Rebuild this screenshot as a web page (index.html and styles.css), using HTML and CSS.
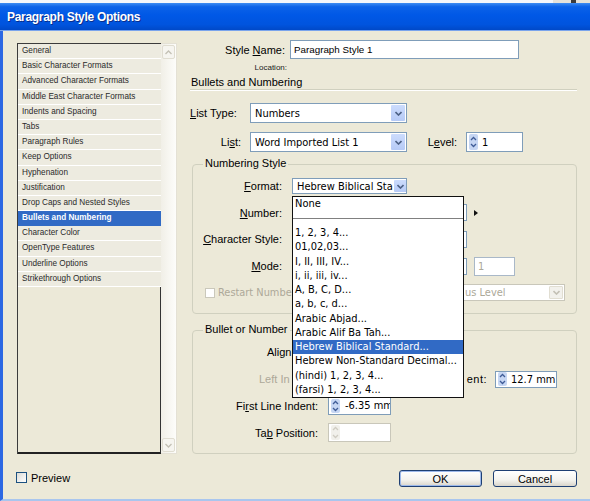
FILE: index.html
```html
<!DOCTYPE html>
<html lang="en">
<head>
    <meta charset="UTF-8">
    <title>Paragraph Style Options</title>
    <link rel="stylesheet" href="styles.css">
</head>
<body>
    <div class="window">
        <div class="frame-top"><span class="behind"></span></div>
        <div class="titlebar">Paragraph Style Options</div>

        <div class="dialog">
            <div class="sidebar">
                <div class="category-list">
                    <div class="items">
                        <div class="item">General</div>
                        <div class="item">Basic Character Formats</div>
                        <div class="item">Advanced Character Formats</div>
                        <div class="item">Middle East Character Formats</div>
                        <div class="item">Indents and Spacing</div>
                        <div class="item">Tabs</div>
                        <div class="item">Paragraph Rules</div>
                        <div class="item">Keep Options</div>
                        <div class="item">Hyphenation</div>
                        <div class="item">Justification</div>
                        <div class="item">Drop Caps and Nested Styles</div>
                        <div class="item selected">Bullets and Numbering</div>
                        <div class="item">Character Color</div>
                        <div class="item">OpenType Features</div>
                        <div class="item">Underline Options</div>
                        <div class="item">Strikethrough Options</div>
                        <div class="empty"></div>
                    </div>
                    <div class="scrollbar">
                        <div class="sb-btn">
                            <svg width="7" height="5" viewBox="0 0 7 5"><path d="M0.5 4 3.5 1 6.5 4"/></svg>
                        </div>
                        <div class="sb-btn">
                            <svg width="7" height="5" viewBox="0 0 7 5"><path d="M0.5 1 3.5 4 6.5 1"/></svg>
                        </div>
                    </div>
                </div>
                <div class="preview">
                    <span class="checkbox"></span>
                    <span>Preview</span>
                </div>
            </div>

            <div class="main">
                <div class="row style-name">
                    <span class="lbl lbl-name">Style <u>N</u>ame:</span>
                    <div class="textbox">Paragraph Style 1</div>
                </div>
                <div class="location">Location:</div>
                <div class="section-title">Bullets and Numbering</div>

                <div class="row list-type">
                    <span class="lbl lbl-type"><u>L</u>ist Type:</span>
                    <div class="select wide">
                        <span class="value">Numbers</span>
                        <span class="drop-btn"><svg width="7" height="5" viewBox="0 0 7 5"><path d="M0.5 1 3.5 4 6.5 1"/></svg></span>
                    </div>
                </div>

                <div class="row list-row">
                    <span class="lbl lbl-list">Li<u>s</u>t:</span>
                    <div class="select wide">
                        <span class="value">Word Imported List 1</span>
                        <span class="drop-btn"><svg width="7" height="5" viewBox="0 0 7 5"><path d="M0.5 1 3.5 4 6.5 1"/></svg></span>
                    </div>
                    <span class="lbl lbl-level">L<u>e</u>vel:</span>
                    <div class="spin level">
                        <svg class="spin-arrows" width="9" height="16" viewBox="0 0 9 16"><rect x="0" y="0" width="9" height="16" rx="2"/><path d="M2 6 4.5 3.5 7 6"/><path d="M2 10 4.5 12.5 7 10"/></svg>
                        <span>1</span>
                    </div>
                </div>

                <div class="group numbering">
                    <span class="legend">Numbering Style</span>
                    <div class="grow">
                        <span class="lbl lbl-g1"><u>F</u>ormat:</span>
                        <div class="select format">
                            <span class="value">Hebrew Biblical Sta</span>
                            <span class="drop-btn"><svg width="7" height="5" viewBox="0 0 7 5"><path d="M0.5 1 3.5 4 6.5 1"/></svg></span>
                        </div>
                    </div>
                    <div class="grow">
                        <span class="lbl lbl-g1"><u>N</u>umber:</span>
                        <div class="textbox field"></div>
                        <span class="arrow-right"></span>
                    </div>
                    <div class="grow">
                        <span class="lbl lbl-g1"><u>C</u>haracter Style:</span>
                        <div class="textbox field"></div>
                    </div>
                    <div class="grow">
                        <span class="lbl lbl-g1"><u>M</u>ode:</span>
                        <div class="textbox field"></div>
                        <div class="textbox mini disabled">1</div>
                    </div>
                    <div class="grow">
                        <span class="checkbox small disabled"></span>
                        <span class="restart-label">Restart Numbe</span>
                        <div class="select restart disabled">
                            <span class="value">us Level</span>
                            <span class="drop-btn"><svg width="7" height="5" viewBox="0 0 7 5"><path d="M0.5 1 3.5 4 6.5 1"/></svg></span>
                        </div>
                    </div>
                </div>

                <div class="group position">
                    <span class="legend">Bullet or Number</span>
                    <div class="grow tall">
                        <span class="lbl-cut align-cut">Align</span>
                        <div class="select align">
                            <span class="value"></span>
                            <span class="drop-btn"><svg width="7" height="5" viewBox="0 0 7 5"><path d="M0.5 1 3.5 4 6.5 1"/></svg></span>
                        </div>
                    </div>
                    <div class="grow tall">
                        <span class="lbl-cut indent-cut muted">Left In</span>
                        <div class="spin indent disabled hidden-part"></div>
                        <span class="lbl lbl-right">ent:</span>
                        <div class="spin indent right">
                            <svg class="spin-arrows" width="9" height="14" viewBox="0 0 9 14"><rect x="0" y="0" width="9" height="14" rx="2"/><path d="M2 5 4.5 2.5 7 5"/><path d="M2 9 4.5 11.5 7 9"/></svg>
                            <span>12.7 mm</span>
                        </div>
                    </div>
                    <div class="grow tall">
                        <span class="lbl lbl-g2">Fi<u>r</u>st Line Indent:</span>
                        <div class="spin indent first">
                            <svg class="spin-arrows" width="9" height="14" viewBox="0 0 9 14"><rect x="0" y="0" width="9" height="14" rx="2"/><path d="M2 5 4.5 2.5 7 5"/><path d="M2 9 4.5 11.5 7 9"/></svg>
                            <span>-6.35 mm</span>
                        </div>
                    </div>
                    <div class="grow tall">
                        <span class="lbl lbl-g2">Ta<u>b</u> Position:</span>
                        <div class="spin indent disabled tab">
                            <svg class="spin-arrows" width="9" height="15" viewBox="0 0 9 15"><rect x="0" y="0" width="9" height="15" rx="2"/><path d="M2 5 4.5 2.5 7 5"/><path d="M2 10 4.5 12.5 7 10"/></svg>
                        </div>
                    </div>
                </div>

                <div class="buttons">
                    <button class="btn default">OK</button>
                    <button class="btn">Cancel</button>
                </div>

                <!-- open Format menu -->
                <div class="dropdown">
                    <div class="dd-head">None</div>
                    <div class="dd-items">
                        <div class="dd-item">1, 2, 3, 4...</div>
                        <div class="dd-item">01,02,03...</div>
                        <div class="dd-item">I, II, III, IV...</div>
                        <div class="dd-item">i, ii, iii, iv...</div>
                        <div class="dd-item">A, B, C, D...</div>
                        <div class="dd-item">a, b, c, d...</div>
                        <div class="dd-item">Arabic Abjad...</div>
                        <div class="dd-item">Arabic Alif Ba Tah...</div>
                        <div class="dd-item active">Hebrew Biblical Standard...</div>
                        <div class="dd-item">Hebrew Non-Standard Decimal...</div>
                        <div class="dd-item">(hindi) 1, 2, 3, 4...</div>
                        <div class="dd-item">(farsi) 1, 2, 3, 4...</div>
                    </div>
                </div>
            </div>
        </div>
    </div>
</body>
</html>
```

FILE: styles.css
```css
:root {
    --face: #ECE9D8;
    --field-border: #7F9DB9;
    --group-border: #D0D0BF;
    --disabled: #ACA899;
    --highlight: #316AC5;
}

* {
    box-sizing: border-box;
}

html, body {
    margin: 0;
}

body {
    width: 590px;
    height: 501px;
    overflow: hidden;
    background-color: var(--face);
    font-family: "Liberation Sans", Arial, sans-serif;
    font-size: 11px;
    color: #000;
}

u {
    text-decoration-thickness: 1px;
    text-underline-offset: 1px;
}

.window {
    width: 590px;
    height: 501px;
    display: flex;
    flex-direction: column;
}

.frame-top {
    height: 3px;
    background-color: #F3F6FB;
    position: relative;
}

.frame-top .behind {
    position: absolute;
    right: 0;
    top: 0;
    width: 37px;
    height: 3px;
    background: linear-gradient(to right, #E4E2DA 0, #E4E2DA 18px, #3B3B3B 18px, #3B3B3B 23px, #E4E2DA 23px);
}

.titlebar {
    height: 28px;
    display: flex;
    align-items: center;
    padding-left: 7px;
    padding-top: 1px;
    background: linear-gradient(#3C8CF3 0%, #0B62E8 14%, #0058E6 45%, #0054DE 80%, #0049C8 100%);
    border-bottom: 1px solid #7AA4EC;
    color: #fff;
    font-weight: bold;
    font-size: 12px;
    letter-spacing: -0.3px;
    text-shadow: 1px 1px 0 #0A2E8C;
}

.dialog {
    flex: 1;
    display: flex;
    border-left: 3px solid #2D68E3;
    border-bottom: 2px solid #A9C6EE;
}

/* left column */

.sidebar {
    width: 160px;
    margin-left: 14px;
    padding-top: 12px;
}

.category-list {
    display: flex;
    height: 411px;
}

.items {
    width: 144px;
    display: flex;
    flex-direction: column;
    border-left: 1px solid #3C3C3C;
    border-top: 1px solid #3C3C3C;
}

.item {
    height: 15.2px;
    line-height: 14px;
    padding-left: 4px;
    font-size: 8.2px;
    color: #2A2A2A;
    white-space: nowrap;
    border-bottom: 1px solid #fff;
    background-color: #EDEBE0;
}

.item.selected {
    background-color: var(--highlight);
    border-bottom-color: var(--highlight);
    color: #fff;
    font-weight: bold;
}

.empty {
    flex: 1;
    border-right: 1px solid #333;
    border-bottom: 2px solid #222;
    background-color: var(--face);
}

.scrollbar {
    width: 16px;
    display: flex;
    flex-direction: column;
    justify-content: space-between;
    padding: 1px;
    background: linear-gradient(to right, #F1EFE7, #FDFDFA);
    border: 1px solid #E4E1D5;
    border-left: none;
}

.sb-btn {
    height: 14px;
    display: flex;
    align-items: center;
    justify-content: center;
    border: 1px solid #E0DDD1;
    border-radius: 2px;
    background-color: #F6F5F0;
}

.sb-btn path {
    fill: none;
    stroke: #C3C0B5;
    stroke-width: 1.3;
}

.preview {
    display: flex;
    align-items: center;
    gap: 4px;
    margin-top: 18px;
    margin-left: -1px;
    height: 11px;
}

.checkbox {
    width: 11px;
    height: 11px;
    flex-shrink: 0;
    border: 1px solid #1C5180;
    background: linear-gradient(135deg, #DCDCD7, #fff);
}

/* right column */

.main {
    width: 387px;
    margin-left: 13px;
    position: relative;
    display: flex;
    flex-direction: column;
}

.row {
    display: flex;
    align-items: center;
}

.lbl {
    text-align: right;
    white-space: nowrap;
    flex-shrink: 0;
}

.muted {
    color: var(--disabled);
}

.style-name {
    margin-top: 9px;
    height: 19px;
}

.lbl-name {
    width: 100px;
    padding-right: 5px;
}

.textbox {
    height: 19px;
    width: 229px;
    flex-shrink: 0;
    border: 1px solid var(--field-border);
    background-color: #fff;
    padding-left: 3px;
    font-size: 9.8px;
    line-height: 17px;
    white-space: nowrap;
    overflow: hidden;
}

.location {
    margin-top: 4px;
    width: 97px;
    height: 10px;
    line-height: 10px;
    text-align: right;
    font-size: 8px;
    color: #222;
}

.section-title {
    margin-top: 3px;
    height: 14px;
    line-height: 12px;
    padding-left: 1px;
    border-bottom: 1px solid var(--group-border);
    box-shadow: 0 1px 0 #fff;
}

.list-type {
    margin-top: 13px;
    height: 20px;
}

.lbl-type {
    width: 60px;
    text-align: left;
}

.list-row {
    margin-top: 9px;
    height: 20px;
}

.lbl-list {
    width: 60px;
    padding-right: 9px;
}

.lbl-level {
    width: 59px;
    padding-right: 9px;
}

/* select boxes */

.select {
    display: flex;
    align-items: stretch;
    flex-shrink: 0;
    border: 1px solid var(--field-border);
    background-color: #fff;
    font-family: "DejaVu Sans", Verdana, sans-serif;
    font-size: 9.9px;
    overflow: hidden;
}

.select .value {
    flex: 1;
    padding-left: 4px;
    display: flex;
    align-items: center;
    white-space: nowrap;
}

.drop-btn {
    width: 14px;
    flex-shrink: 0;
    margin: 1px;
    border-radius: 1px;
    background: linear-gradient(#CCDCFD, #B6CAF6);
    display: flex;
    align-items: center;
    justify-content: center;
}

.drop-btn path {
    fill: none;
    stroke: #4D6185;
    stroke-width: 1.6;
}

.select.wide {
    width: 157px;
    height: 20px;
}

.select.format {
    width: 115px;
    height: 16px;
}

.select.align {
    width: 120px;
    height: 18px;
    margin-left: 36px;
}

/* only the part right of the open menu is seen */
.select.restart {
    width: 101px;
    height: 17px;
    margin-left: 172px;
    border-left: none;
}

.select.restart .value {
    padding-left: 1px;
}

.select.disabled {
    border-color: #C9C7BA;
    color: var(--disabled);
}

.select.disabled .drop-btn {
    background: #F2F1EC;
    border: 1px solid #E1DED2;
}

.select.disabled .drop-btn path {
    stroke: #C3C0B5;
}

/* spin boxes */

.spin {
    display: flex;
    align-items: center;
    flex-shrink: 0;
    gap: 4px;
    padding-left: 2px;
    border: 1px solid var(--field-border);
    background-color: #fff;
    font-family: "DejaVu Sans", Verdana, sans-serif;
    font-size: 9.9px;
    white-space: nowrap;
    overflow: hidden;
}

.spin-arrows {
    flex-shrink: 0;
}

.spin-arrows rect {
    fill: #C6D6F3;
}

.spin-arrows path {
    fill: none;
    stroke: #3F5C97;
    stroke-width: 1.3;
}

.spin.level {
    width: 57px;
    height: 20px;
}

.spin.indent {
    width: 63px;
    height: 18px;
}

.spin.first {
    gap: 5px;
}

.spin.indent.right {
    width: 62px;
    height: 17px;
}

.spin.disabled {
    border-color: #C9C7BA;
}

.spin.tab {
    height: 19px;
}

.spin.hidden-part {
    margin-left: 36px;
}

.spin.disabled .spin-arrows rect {
    fill: #F1F0EB;
}

.spin.disabled .spin-arrows path {
    stroke: #CFCCC2;
}

/* group boxes */

.group {
    position: relative;
    margin-left: 2px;
    width: 385px;
    border: 1px solid var(--group-border);
    border-radius: 4px;
}

.legend {
    position: absolute;
    top: -9px;
    left: 10px;
    padding: 0 2px;
    line-height: 14px;
    background-color: var(--face);
}

.numbering {
    margin-top: 12px;
    height: 150px;
    padding-top: 8px;
}

.position {
    margin-top: 16px;
    height: 124px;
    padding-top: 8px;
}

.grow {
    height: 26.6px;
    display: flex;
    align-items: center;
}

.grow.tall {
    height: 26.8px;
}

.lbl-g1 {
    width: 99px;
    padding-right: 10px;
}

.lbl-g2 {
    width: 135px;
    padding-right: 10px;
}

/* labels partly covered by the open menu */
.lbl-cut {
    width: 99px;
    flex-shrink: 0;
    white-space: nowrap;
}

.align-cut {
    padding-left: 74px;
}

.indent-cut {
    padding-left: 66px;
}

.lbl-right {
    width: 25px;
    margin-left: 71px;
    margin-right: 8px;
    letter-spacing: 0.5px;
}

.textbox.field {
    width: 175px;
    height: 17px;
}

.textbox.mini {
    width: 41px;
    height: 19px;
    margin-left: 7px;
    font-family: "DejaVu Sans", Verdana, sans-serif;
    font-size: 9.9px;
}

.textbox.disabled {
    border-color: #A9B8C8;
    color: var(--disabled);
}

.arrow-right {
    margin-left: 7px;
    width: 0;
    height: 0;
    border-left: 4px solid #111;
    border-top: 3.5px solid transparent;
    border-bottom: 3.5px solid transparent;
}

.checkbox.small {
    width: 10px;
    height: 10px;
    margin-left: 12px;
}

.checkbox.disabled {
    border-color: #CAC8BB;
    background: #fff;
}

.restart-label {
    width: 77px;
    flex-shrink: 0;
    padding-left: 3px;
    font-family: "DejaVu Sans", Verdana, sans-serif;
    font-size: 9.8px;
    color: var(--disabled);
    white-space: nowrap;
}

/* buttons */

.buttons {
    margin-top: 16px;
    display: flex;
    justify-content: flex-end;
    gap: 11px;
}

.btn {
    width: 84px;
    height: 17px;
    padding: 0;
    border: 1px solid #1E3F73;
    border-radius: 3px;
    background: linear-gradient(#FFFFFF, #F4F3EE 60%, #D9D5CB);
    font-family: "Liberation Sans", Arial, sans-serif;
    font-size: 11px;
    color: #000;
}

.btn.default {
    width: 83px;
    box-shadow: inset 0 0 0 1px #9DB9EB;
}

/* open menu for Format */

.dropdown {
    position: absolute;
    left: 102px;
    top: 165px;
    width: 172px;
    height: 202px;
    border: 1px solid #111;
    background-color: #fff;
    font-family: "DejaVu Sans", Verdana, sans-serif;
    font-size: 9.9px;
}

.dd-head {
    height: 22px;
    padding-left: 2px;
    line-height: 13px;
    border-bottom: 1px solid #808080;
}

.dd-items {
    padding-top: 7px;
}

.dd-item {
    height: 14.25px;
    line-height: 14px;
    padding-left: 2px;
    white-space: nowrap;
}

.dd-item.active {
    background-color: var(--highlight);
    color: #fff;
}
```
